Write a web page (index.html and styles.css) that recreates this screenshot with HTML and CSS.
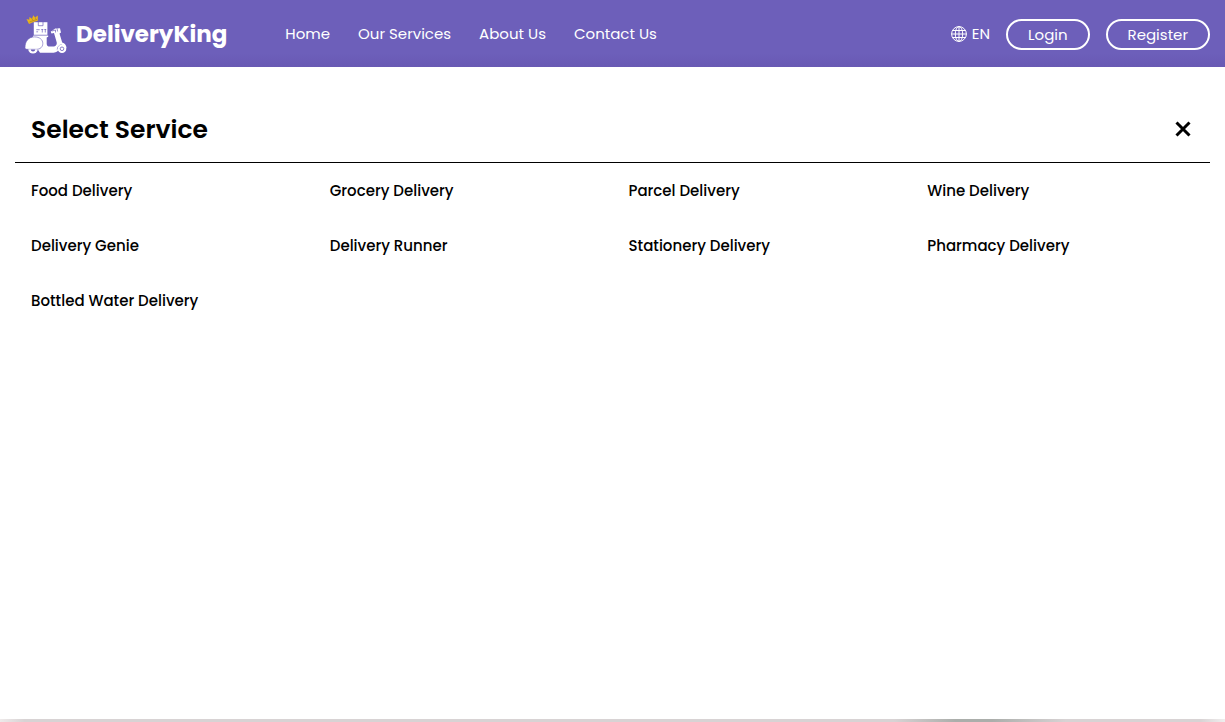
FILE: index.html
```html
<!DOCTYPE html>
<html lang="en">
<head>
<meta charset="utf-8">
<meta name="viewport" content="width=device-width, initial-scale=1">
<title>DeliveryKing</title>
<link rel="stylesheet" href="styles.css">
</head>
<body>
<header class="header">
  <a class="brand" href="#">
    <svg class="brand-icon" viewBox="0 0 44 40" aria-hidden="true">
      <path d="M5 10 2.500 5l2.700.8.3-2.800 2.500 1.800L9.300 1.200l1.800 2.200L13.800 1.500v5.200L9.500 8z" fill="#e9b41c"/>
      <path d="M5.500 8l7.500-2.600M8 4.500l.8 2M11.500 3.500l.3 2" stroke="#96702f" stroke-width=".5"/>
      <path d="M9.800 8.200h13.600v12.600H9.800z" fill="#fff"/>
      <path d="M14.300 8v3.700h4.700V8M12.300 15.700h3.400M12.300 17.800h1.800M18.300 18.500V15m-1 1 1-1 1 1M21.300 18.500V15m-.9 1 .9-1 .9 1" fill="none" stroke="#6d5fba" stroke-width=".7"/>
      <path d="M9.500 21.400h14.700v1.400l-1.500.7v6.500c.2 1.800 1.300 2.600 3 2.600h3.600c2.700 0 4-2.200 3.300-4.500L30 19l-2.500.4-.8-1.700 4.500-3.200 4.800-.3 1 4.300-1.500 1 2.700 9c2.700.8 4.200 2.700 4.300 5.500h-7c-1.200 2.800-3 4.700-6 4.700H16L13.500 35H2z" fill="#fff"/>
      <path d="M28 17l3.500-1v2.500m1.500-4.300.6 3.300" fill="none" stroke="#6d5fba" stroke-width=".7"/>
      <path d="M1 33.600C1 27.200 4.500 22.900 10.500 22.900c5 0 8.300 2.700 8.300 6.600 0 3.600-2.700 5.800-6.300 5.800H3c-1.400 0-2-.6-2-1.700z" fill="#fff" stroke="#6d5fba" stroke-width=".6"/>
      <path d="M4.300 35.300a4.700 4.300 0 0 0 9.400 0z" fill="#fff"/>
      <path d="M6.800 35.500a2.200 2 0 0 0 4.400 0z" fill="#6d5fba"/>
      <path d="M33.200 35.500c.4-3.200 2.200-4.800 4.800-4.800" fill="none" stroke="#6d5fba" stroke-width=".7"/>
      <circle cx="38" cy="34.800" r="4.300" fill="#fff"/>
      <circle cx="38" cy="34.800" r="1.800" fill="#fff" stroke="#6d5fba" stroke-width=".8"/>
    </svg>
    <span>DeliveryKing</span>
  </a>
  <nav class="nav" aria-label="Main">
    <a href="#">Home</a>
    <a href="#">Our Services</a>
    <a href="#">About Us</a>
    <a href="#">Contact Us</a>
  </nav>
  <div class="actions">
    <button class="language" type="button">
      <svg viewBox="0 0 16 16" aria-hidden="true"><g fill="none" stroke="#fff"><circle cx="8" cy="8" r="7.400"/><ellipse cx="8" cy="8" rx="3.700" ry="7.400"/><path d="M8 .5v15M.5 8h15M1.500 4.500h13M1.500 11.500h13"/></g></svg>
      <span>EN</span>
    </button>
    <button class="pill" type="button">Login</button>
    <button class="pill" type="button">Register</button>
  </div>
</header>
<main class="panel">
  <div class="panel-head">
    <h1>Select Service</h1>
    <button class="close" type="button" aria-label="Close">
      <svg viewBox="0 0 16 16" aria-hidden="true"><path d="M1.500 1.500l13 13M14.500 1.500l-13 13" stroke="#000" stroke-width="3"/></svg>
    </button>
  </div>
  <ul class="services">
    <li><a href="#">Food Delivery</a></li>
    <li><a href="#">Grocery Delivery</a></li>
    <li><a href="#">Parcel Delivery</a></li>
    <li><a href="#">Wine Delivery</a></li>
    <li><a href="#">Delivery Genie</a></li>
    <li><a href="#">Delivery Runner</a></li>
    <li><a href="#">Stationery Delivery</a></li>
    <li><a href="#">Pharmacy Delivery</a></li>
    <li><a href="#">Bottled Water Delivery</a></li>
  </ul>
</main>
<div class="backdrop"></div>
</body>
</html>
```
FILE: styles.css
```css
* { box-sizing: border-box; }

body {
  display: flex;
  flex-direction: column;
  min-height: 100vh;
  margin: 0;
  background: #fff;
  color: #000;
  font: 15px/23px Poppins, Inter, sans-serif;
}

a { color: inherit; text-decoration: none; }

button {
  padding: 0;
  border: 0;
  background: none;
  color: inherit;
  font: inherit;
  cursor: pointer;
}

.header {
  display: flex;
  align-items: center;
  padding: 14px 15px 13px 24px;
  background: linear-gradient(#6d5fba 80%, #6859b3);
  color: #fff;
}

.brand {
  display: flex;
  align-items: center;
  gap: 8px;
  font-size: 23px;
  font-weight: 700;
  line-height: 40px;
}

.brand-icon { width: 44px; height: 40px; }

.nav {
  display: flex;
  gap: 28px;
  margin-left: 58px;
  line-height: 22px;
}

.actions {
  display: flex;
  align-items: center;
  gap: 16px;
  margin-left: auto;
}

.language {
  display: flex;
  align-items: center;
  gap: 5px;
  line-height: 22px;
}

.language svg { width: 16px; height: 16px; }

.pill {
  padding: 2px 20px;
  border: 2px solid #fff;
  border-radius: 16px;
}

.panel {
  flex: 1;
  padding: 36px 15px;
}

.panel-head {
  display: flex;
  align-items: center;
  justify-content: space-between;
  padding: 6px 19px 13px 16px;
  border-bottom: 1px solid #000;
}

.panel-head h1 {
  margin: 0;
  padding-top: 2px;
  font-size: 25px;
  font-weight: 600;
  line-height: 38px;
}

.close { display: flex; }

.close svg { width: 16px; height: 16px; }

.services {
  display: grid;
  grid-template-columns: repeat(4, 1fr);
  margin: 0;
  padding: 0;
  list-style: none;
  font-weight: 500;
}

.services a {
  display: block;
  padding: 16px;
}

.backdrop {
  height: 3px;
  background: linear-gradient(90deg, #eeeaea, #d8d3d4 2%, #d8d3d4 73%, #abaeab 78%, #abaeab 81%, #d8d3d4 87%, #d8d3d4 98%, #f0eeee);
}
```
